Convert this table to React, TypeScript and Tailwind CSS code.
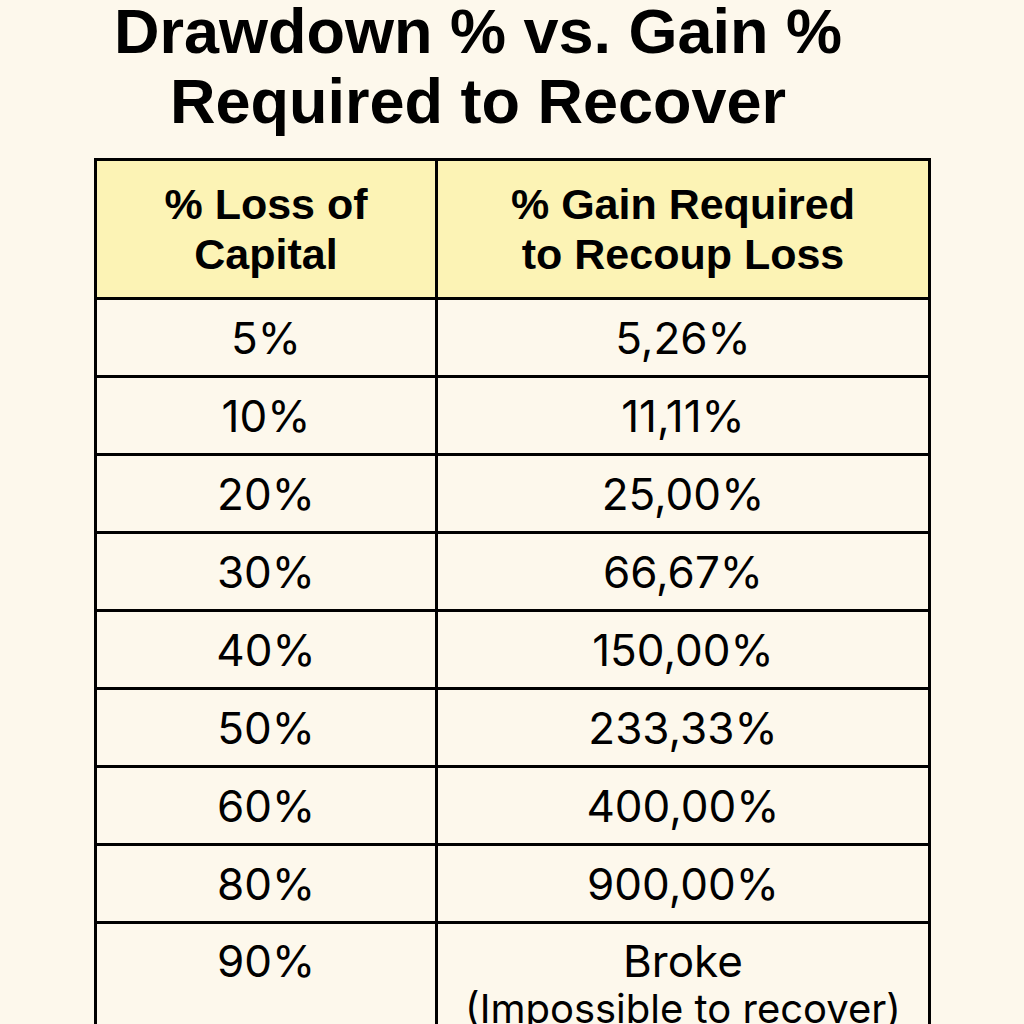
import React from "react";

const rows: [string, string][] = [
  ["5%", "5,26%"],
  ["10%", "11,11%"],
  ["20%", "25,00%"],
  ["30%", "66,67%"],
  ["40%", "150,00%"],
  ["50%", "233,33%"],
  ["60%", "400,00%"],
  ["80%", "900,00%"],
];

const boldFont = { fontFamily: "'Liberation Sans', Arial, sans-serif" };

export default function App() {
  return (
    <div
      className="w-[1024px] h-[1024px] overflow-hidden bg-[#fdf8ec] text-black"
      style={{ fontFamily: "Inter, 'Noto Sans', sans-serif" }}
    >
      <h1 className="w-[956px] text-center text-[63px] font-bold" style={boldFont}>
        <span className="block leading-[62px]">Drawdown % vs. Gain %</span>
        <span className="block leading-[78px]">Required to Recover</span>
      </h1>
      <div className="ml-[94px] mt-[18px] w-[837px] border-[3px] border-black border-b-0">
        <div className="grid grid-cols-[341px_1fr] bg-[#fcf3b5] h-[139px] border-b-[3px] border-black">
          <div
            className="border-r-[3px] border-black flex items-center justify-center text-center text-[43px] leading-[50px] font-bold"
            style={boldFont}
          >
            <span>
              % Loss of
              <br />
              Capital
            </span>
          </div>
          <div
            className="flex items-center justify-center text-center text-[43px] leading-[50px] font-bold"
            style={boldFont}
          >
            <span>
              % Gain Required
              <br />
              to Recoup Loss
            </span>
          </div>
        </div>
        {rows.map(([a, b]) => (
          <div
            key={a}
            className="grid grid-cols-[341px_1fr] h-[78px] border-b-[3px] border-black text-[44px]"
          >
            <div className="border-r-[3px] border-black flex items-center justify-center">
              {a}
            </div>
            <div className="flex items-center justify-center">{b}</div>
          </div>
        ))}
        <div className="grid grid-cols-[341px_1fr] h-[140px]">
          <div className="border-r-[3px] border-black flex justify-center pt-[13px] text-[44px] leading-[48px]">
            90%
          </div>
          <div className="flex flex-col items-center pt-[13px]">
            <span className="text-[44px] leading-[48px]">Broke</span>
            <span className="mt-[2px] text-[40px] leading-[44px]">(Impossible to recover)</span>
          </div>
        </div>
      </div>
    </div>
  );
}
